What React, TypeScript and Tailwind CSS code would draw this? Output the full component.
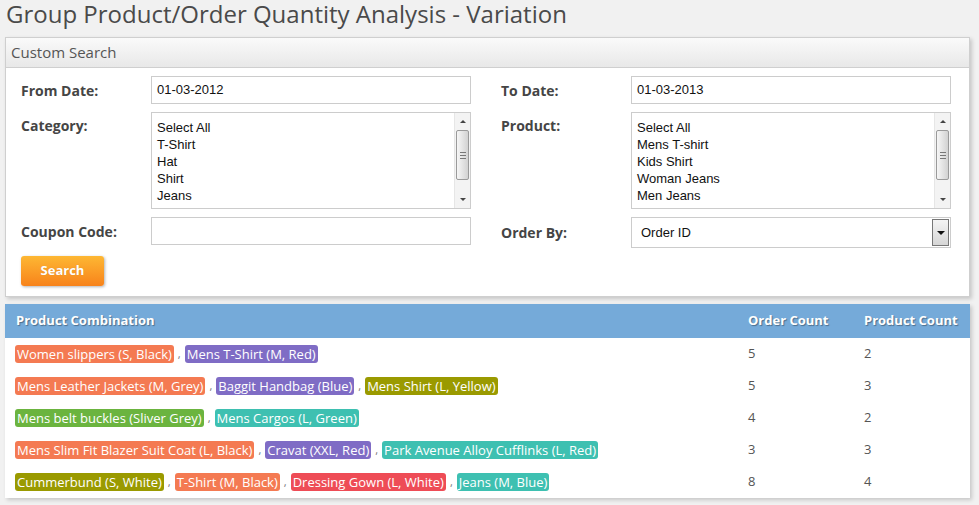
import React from "react";

const OS = { fontFamily: '"Open Sans", "Noto Sans", sans-serif' };
const LS = { fontFamily: '"Liberation Sans", Arial, sans-serif' };

function ScrollBar() {
  return (
    <div className="flex flex-col w-[16px] h-full bg-[#f3f3f3] border-l border-[#e6e6e6]">
      <div className="h-[17px] flex items-center justify-center">
        <div className="w-0 h-0 border-l-[3px] border-r-[3px] border-b-[3px] border-l-transparent border-r-transparent border-b-[#444]" />
      </div>
      <div className="mx-[1px] h-[50px] rounded-[2px] border border-[#9a9a9a] bg-gradient-to-r from-[#f6f6f6] via-[#e4e4e4] to-[#d2d2d2] flex flex-col items-center justify-center gap-[2px]">
        <div className="w-[6px] h-[1px] bg-[#777]" />
        <div className="w-[6px] h-[1px] bg-[#777]" />
        <div className="w-[6px] h-[1px] bg-[#777]" />
      </div>
      <div className="flex-1" />
      <div className="h-[17px] flex items-center justify-center">
        <div className="w-0 h-0 border-l-[3px] border-r-[3px] border-t-[3px] border-l-transparent border-r-transparent border-t-[#444]" />
      </div>
    </div>
  );
}

function ListBox({ items }: { items: string[] }) {
  return (
    <div className="w-[320px] h-[97px] border border-[#cccccc] bg-white flex overflow-hidden">
      <div className="flex-1 pt-[6px] pl-[5px] overflow-hidden text-[13px] leading-[17px] text-[#111]" style={LS}>
        {items.map((t) => (
          <div key={t}>{t}</div>
        ))}
      </div>
      <ScrollBar />
    </div>
  );
}

function Label({ children, top }: { children: React.ReactNode; top?: boolean }) {
  return (
    <div
      className={`w-[130px] shrink-0 text-[14px] font-bold text-[#454545] ${top ? "pt-[3px]" : "self-center"}`}
      style={OS}
    >
      {children}
    </div>
  );
}

function TextInput({ value }: { value: string }) {
  return (
    <div
      className="w-[320px] h-[28px] border border-[#cccccc] bg-white pl-[5px] flex items-center text-[13px] text-[#111]"
      style={LS}
    >
      {value}
    </div>
  );
}

function SelectBox({ value }: { value: string }) {
  return (
    <div className="w-[320px] h-[31px] border border-[#cccccc] bg-white flex items-stretch">
      <div className="flex-1 pl-[9px] flex items-center text-[13px] text-[#111]" style={LS}>
        {value}
      </div>
      <div className="w-[17px] my-[1px] mr-[1px] border border-[#777] bg-gradient-to-b from-[#f4f4f4] to-[#d6d6d6] flex items-center justify-center">
        <div className="w-0 h-0 border-l-[4px] border-r-[4px] border-t-[4px] border-l-transparent border-r-transparent border-t-[#111]" />
      </div>
    </div>
  );
}

const C = {
  orange: "bg-[#f47a52]",
  purple: "bg-[#7f6cc5]",
  olive: "bg-[#9a9a00]",
  green: "bg-[#6bb43f]",
  teal: "bg-[#3ec0b1]",
  red: "bg-[#ee4c56]",
};

type B = [string, string];
const rows: { badges: B[]; oc: number; pc: number }[] = [
  { badges: [["Women slippers (S, Black)", C.orange], ["Mens T-Shirt (M, Red)", C.purple]], oc: 5, pc: 2 },
  {
    badges: [
      ["Mens Leather Jackets (M, Grey)", C.orange],
      ["Baggit Handbag (Blue)", C.purple],
      ["Mens Shirt (L, Yellow)", C.olive],
    ],
    oc: 5,
    pc: 3,
  },
  { badges: [["Mens belt buckles (Sliver Grey)", C.green], ["Mens Cargos (L, Green)", C.teal]], oc: 4, pc: 2 },
  {
    badges: [
      ["Mens Slim Fit Blazer Suit Coat (L, Black)", C.orange],
      ["Cravat (XXL, Red)", C.purple],
      ["Park Avenue Alloy Cufflinks (L, Red)", C.teal],
    ],
    oc: 3,
    pc: 3,
  },
  {
    badges: [
      ["Cummerbund (S, White)", C.olive],
      ["T-Shirt (M, Black)", C.orange],
      ["Dressing Gown (L, White)", C.red],
      ["Jeans (M, Blue)", C.teal],
    ],
    oc: 8,
    pc: 4,
  },
];

export default function App() {
  return (
    <div className="w-[979px] h-[505px] bg-[#f1f1f1] overflow-hidden" style={OS}>
      <h1 className="pl-[6px] text-[24px] leading-[28px] text-[#4a4a4a] font-normal h-[37px]">
        Group Product/Order Quantity Analysis - Variation
      </h1>

      <div className="ml-[5px] w-[965px] border border-[#cfcfcf] bg-white shadow-[2px_2px_4px_rgba(0,0,0,0.18)]">
        <div className="h-[30px] bg-gradient-to-b from-[#fafafa] to-[#e8e8e8] border-b border-[#cfcfcf] pl-[5px] flex items-center text-[15px] text-[#555]">
          Custom Search
        </div>
        <div className="pt-[8px] pb-[10px] pl-[15px] flex flex-col gap-[8px]">
          <div className="flex gap-[30px]">
            <div className="flex">
              <Label>From Date:</Label>
              <TextInput value="01-03-2012" />
            </div>
            <div className="flex">
              <Label>To Date:</Label>
              <TextInput value="01-03-2013" />
            </div>
          </div>
          <div className="flex gap-[30px]">
            <div className="flex">
              <Label top>Category:</Label>
              <ListBox items={["Select All", "T-Shirt", "Hat", "Shirt", "Jeans", "Jackets"]} />
            </div>
            <div className="flex">
              <Label top>Product:</Label>
              <ListBox items={["Select All", "Mens T-shirt", "Kids Shirt", "Woman Jeans", "Men Jeans", "Kids Jeans"]} />
            </div>
          </div>
          <div className="flex gap-[30px] items-start">
            <div className="flex h-[28px]">
              <Label>Coupon Code:</Label>
              <TextInput value="" />
            </div>
            <div className="flex h-[31px]">
              <Label>Order By:</Label>
              <SelectBox value="Order ID" />
            </div>
          </div>
          <div>
            <button className="w-[83px] h-[30px] rounded-[3px] bg-gradient-to-b from-[#fdb733] to-[#f7821a] text-white text-[13px] font-bold shadow-[1px_1px_3px_rgba(0,0,0,0.3)] [text-shadow:0_0_1px_rgba(0,0,0,0.15)]">
              Search
            </button>
          </div>
        </div>
      </div>

      <div className="ml-[5px] mt-[7px] w-[965px] bg-white shadow-[2px_2px_4px_rgba(0,0,0,0.18)]">
        <div className="h-[34px] bg-[#75aad9] flex items-center text-white text-[13px] font-bold [text-shadow:1px_1px_1px_rgba(0,0,0,0.35)]">
          <div className="w-[732px] pl-[11px]">Product Combination</div>
          <div className="w-[116px] pl-[11px]">Order Count</div>
          <div className="flex-1 pl-[11px]">Product Count</div>
        </div>
        {rows.map((r, i) => (
          <div key={i} className="h-[32px] flex items-center text-[13px] text-[#555]">
            <div className="w-[732px] pl-[10px] flex items-center">
              {r.badges.map(([t, c], j) => (
                <React.Fragment key={j}>
                  {j > 0 && <span className="text-[#777] text-[11px] px-[4px]">,</span>}
                  <span className={`${c} text-white rounded-[3px] px-[2px] h-[18px] leading-[18px] inline-block`}>{t}</span>
                </React.Fragment>
              ))}
            </div>
            <div className="w-[116px] pl-[11px]">{r.oc}</div>
            <div className="flex-1 pl-[11px]">{r.pc}</div>
          </div>
        ))}
      </div>
    </div>
  );
}
